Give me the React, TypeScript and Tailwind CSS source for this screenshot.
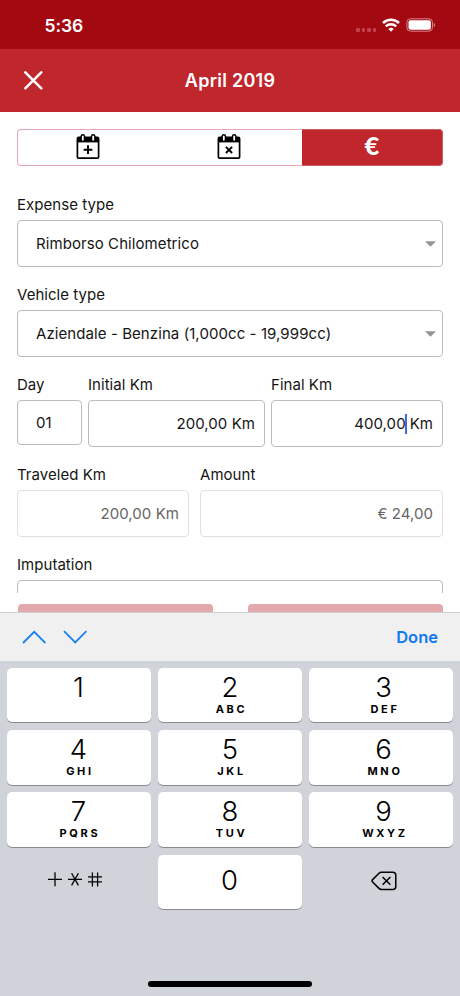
import type { ReactNode } from "react";

const keys = [
  { digit: "1", letters: "" },
  { digit: "2", letters: "ABC" },
  { digit: "3", letters: "DEF" },
  { digit: "4", letters: "GHI" },
  { digit: "5", letters: "JKL" },
  { digit: "6", letters: "MNO" },
  { digit: "7", letters: "PQRS" },
  { digit: "8", letters: "TUV" },
  { digit: "9", letters: "WXYZ" },
];

function StatusBar() {
  return (
    <div className="flex h-[49px] items-center bg-[#a30910] pl-[44.5px] pr-[24px] text-white">
      <span className="mt-[3px] text-[17.5px] font-semibold leading-6 tracking-[-0.1px]">5:36</span>
      <div className="ml-auto flex items-center">
        <div className="mt-[11px] flex gap-[2px]">
          <span className="h-[3.5px] w-[3.5px] rounded-[1px] bg-[#c2414a]" />
          <span className="h-[3.5px] w-[3.5px] rounded-[1px] bg-[#c2414a]" />
          <span className="h-[3.5px] w-[3.5px] rounded-[1px] bg-[#c2414a]" />
          <span className="h-[3.5px] w-[3.5px] rounded-[1px] bg-[#c2414a]" />
        </div>
        <svg className="ml-[6px] mt-[1px]" width="18" height="14" viewBox="0 0 18 14" fill="none" stroke="white">
          <path d="M1 5A11.4 11.4 0 0 1 17 5" strokeWidth="2.6" />
          <path d="M3.8 8.4A7.4 7.4 0 0 1 14.2 8.4" strokeWidth="2.4" />
          <path d="M9 13.7L6.3 11A4 4 0 0 1 11.7 11Z" fill="white" stroke="none" />
        </svg>
        <svg className="ml-[6px] mt-[1px]" width="30" height="14" viewBox="0 0 30 14">
          <rect x="0.9" y="0.8" width="25.6" height="12.4" rx="3.6" fill="none" stroke="#d9858a" strokeWidth="1" />
          <rect x="2.5" y="2.3" width="22.4" height="9.4" rx="2" fill="white" />
          <path d="M27.8 4.8C29.6 5.5 29.6 8.5 27.8 9.2Z" fill="#d9858a" />
        </svg>
      </div>
    </div>
  );
}

function Header() {
  return (
    <div className="grid h-[63px] grid-cols-[60px_1fr_60px] items-center bg-[#c0272d] text-white">
      <svg className="ml-[24px]" width="19" height="19" viewBox="0 0 19 19" stroke="white" strokeWidth="2.5" strokeLinecap="round">
        <path d="M1.3 1.3L17.3 17.3M17.3 1.3L1.3 17.3" />
      </svg>
      <h1 className="pt-[1px] text-center text-[18px] font-semibold leading-6 tracking-[0.25px]">April 2019</h1>
    </div>
  );
}

function CalendarIcon({ children }: { children: ReactNode }) {
  return (
    <svg width="24" height="26" viewBox="0 0 24 26" fill="none">
      <rect x="1.4" y="3.4" width="21.2" height="20.8" rx="1.2" stroke="black" strokeWidth="1.7" />
      <path d="M1 3H23V8.4H1Z" fill="black" />
      <rect x="4.4" y="0" width="4.8" height="7.6" rx="2.4" fill="black" />
      <rect x="14.8" y="0" width="4.8" height="7.6" rx="2.4" fill="black" />
      <rect x="5.9" y="1.5" width="1.8" height="5.2" rx="0.9" fill="white" />
      <rect x="16.3" y="1.5" width="1.8" height="5.2" rx="0.9" fill="white" />
      <g stroke="black" strokeWidth="1.9">{children}</g>
    </svg>
  );
}

function Segments() {
  return (
    <div className="grid h-[37px] grid-cols-[285px_1fr]">
      <div className="grid grid-cols-2 rounded-l-[4px] border border-r-0 border-[#e5a9b5] pr-[2px]">
        <button className="flex items-center justify-center pb-[2px] pr-[2px]">
          <CalendarIcon>
            <path d="M12 11.3V20.1M7.6 15.7H16.4" />
          </CalendarIcon>
        </button>
        <button className="flex items-center justify-center pb-[2px] pr-[1px]">
          <CalendarIcon>
            <path d="M8.9 12.8L15.1 19M15.1 12.8L8.9 19" />
          </CalendarIcon>
        </button>
      </div>
      <button className="flex items-center justify-center rounded-r-[4px] border border-l-0 border-[#cf5a60] bg-[#c0272d] pb-[4px] font-['Lato'] text-[25.5px] font-black leading-none text-white">
        €
      </button>
    </div>
  );
}

function Field({ label, className = "", children }: { label: string; className?: string; children: ReactNode }) {
  return (
    <div className={`h-[90px] ${className}`}>
      <div className="mb-[5px] text-[15px] leading-[20px] tracking-[0.04px]">{label}</div>
      {children}
    </div>
  );
}

function Select({ value }: { value: string }) {
  return (
    <div className="flex h-[47px] items-center rounded-[4px] border border-[#bcbcbc] pl-[18px] pr-[6px] text-[15px] tracking-[0.08px]">
      <span className="pt-[1.5px]">{value}</span>
      <svg className="ml-auto" width="11" height="6" viewBox="0 0 11 6" fill="#949494">
        <path d="M0 0.3H11L5.5 5.8Z" />
      </svg>
    </div>
  );
}

function AmountInput({ disabled = false, children }: { disabled?: boolean; children: ReactNode }) {
  return (
    <div
      className={`flex h-[47px] items-center justify-end rounded-[4px] border pr-[9px] pt-[1.5px] text-[15px] tracking-[0.06px] ${
        disabled ? "border-[#e0e0e0] text-[#656565]" : "border-[#bcbcbc]"
      }`}
    >
      {children}
    </div>
  );
}

function ExpenseForm() {
  return (
    <div className="h-[481px] overflow-hidden px-[17px] pt-[17px]">
      <Segments />
      <div className="mt-[29px]">
        <Field label="Expense type">
          <Select value="Rimborso Chilometrico" />
        </Field>
        <Field label="Vehicle type">
          <Select value="Aziendale - Benzina (1,000cc - 19,999cc)" />
        </Field>
        <div className="grid grid-cols-[65px_177px_172px] gap-x-[6px]">
          <Field label="Day">
            <div className="flex h-[45px] items-center rounded-[4px] border border-[#bcbcbc] pl-[18px] pt-[1px] text-[15px]">01</div>
          </Field>
          <Field label="Initial Km">
            <AmountInput>200,00 Km</AmountInput>
          </Field>
          <Field label="Final Km">
            <AmountInput>
              400,00
              <span className="-ml-[1px] mr-[3px] h-[20px] w-[2px] bg-[#4268e0]" />
              Km
            </AmountInput>
          </Field>
        </div>
        <div className="grid grid-cols-[172px_243px] gap-x-[11px]">
          <Field label="Traveled Km">
            <AmountInput disabled>200,00 Km</AmountInput>
          </Field>
          <Field label="Amount">
            <AmountInput disabled>€ 24,00</AmountInput>
          </Field>
        </div>
        <Field label="Imputation">
          <Select value="" />
        </Field>
      </div>
    </div>
  );
}

function Keypad() {
  return (
    <div className="h-[335px] bg-[#d0d3d9] pt-[7px] text-black">
      <div className="grid grid-cols-3 gap-x-[7px] gap-y-[7.8px] px-[7px]">
        {keys.map((key, i) => (
          <button
            key={key.digit}
            className={`flex h-[54.4px] flex-col items-center rounded-[5px] bg-white pt-[5px] shadow-[0_1px_0_#898b8f] ${
              i % 3 === 2 ? "pl-[5px]" : i % 3 === 0 ? "pr-[1px]" : ""
            }`}
          >
            <span className="text-[27.5px] font-[350] leading-[29px]">{key.digit}</span>
            <span className="pl-[3px] text-[11px] font-bold leading-[14.5px] tracking-[2.7px]">{key.letters}</span>
          </button>
        ))}
        <button className="flex h-[54.4px] items-center justify-center">
          <svg className="-mt-[5px] mr-[8px]" width="54" height="15" viewBox="0 0 54 15" fill="none" stroke="black" strokeWidth="1.3">
            <path d="M0 7.3H14M7 0.3V14.3" />
            <path d="M20 7.3H34M23.6 1.2L30.4 13.4M30.4 1.2L23.6 13.4" />
            <path d="M40 4.8H54M40 9.8H54M44.4 0.5V14.5M49.6 0.5V14.5" />
          </svg>
        </button>
        <button className="flex h-[54.4px] items-center justify-center rounded-[5px] bg-white pb-[2px] pr-[1px] text-[27.5px] font-[350] shadow-[0_1px_0_#898b8f]">
          0
        </button>
        <button className="flex h-[54.4px] items-center justify-center">
          <svg className="-mt-[2px] ml-[6px]" width="26" height="20" viewBox="0 0 26 20" fill="none" stroke="black" strokeWidth="1.5" strokeLinejoin="round">
            <path d="M10.4 1.2H21.8A3 3 0 0 1 24.8 4.2V15.4A3 3 0 0 1 21.8 18.4H10.4Q9 18.4 8 17.4L1.6 11Q0.4 9.8 1.6 8.6L8 2.2Q9 1.2 10.4 1.2Z" />
            <path d="M11.6 6L19.4 13.8M19.4 6L11.6 13.8" />
          </svg>
        </button>
      </div>
      <div className="mx-auto mt-[72px] h-[6px] w-[164px] rounded-full bg-black" />
    </div>
  );
}

function App() {
  return (
    <div className="h-[996px] w-[460px] overflow-hidden bg-white font-['Inter','Liberation_Sans',sans-serif] text-[#151515]">
      <StatusBar />
      <Header />
      <ExpenseForm />
      <div className="flex h-[19px] justify-between overflow-hidden pl-[18px] pr-[17px] pt-[11px]">
        <div className="h-[46px] w-[195px] rounded-[4px] bg-[#e3a8ab]" />
        <div className="h-[46px] w-[195px] rounded-[4px] bg-[#e3a8ab]" />
      </div>
      <div className="flex h-[49px] items-center border-t border-[#cfcfd0] bg-[#f0f0f0] px-[22px]">
        <svg width="66" height="14" viewBox="0 0 66 14" fill="none" stroke="#1a80f0" strokeWidth="1.8">
          <path d="M1 13L12.2 1.8L23.4 13" />
          <path d="M42 1.2L53.2 12.4L64.4 1.2" />
        </svg>
        <button className="ml-auto pt-[1px] text-[16.5px] font-semibold text-[#1279f2]">Done</button>
      </div>
      <Keypad />
    </div>
  );
}

export default App;
